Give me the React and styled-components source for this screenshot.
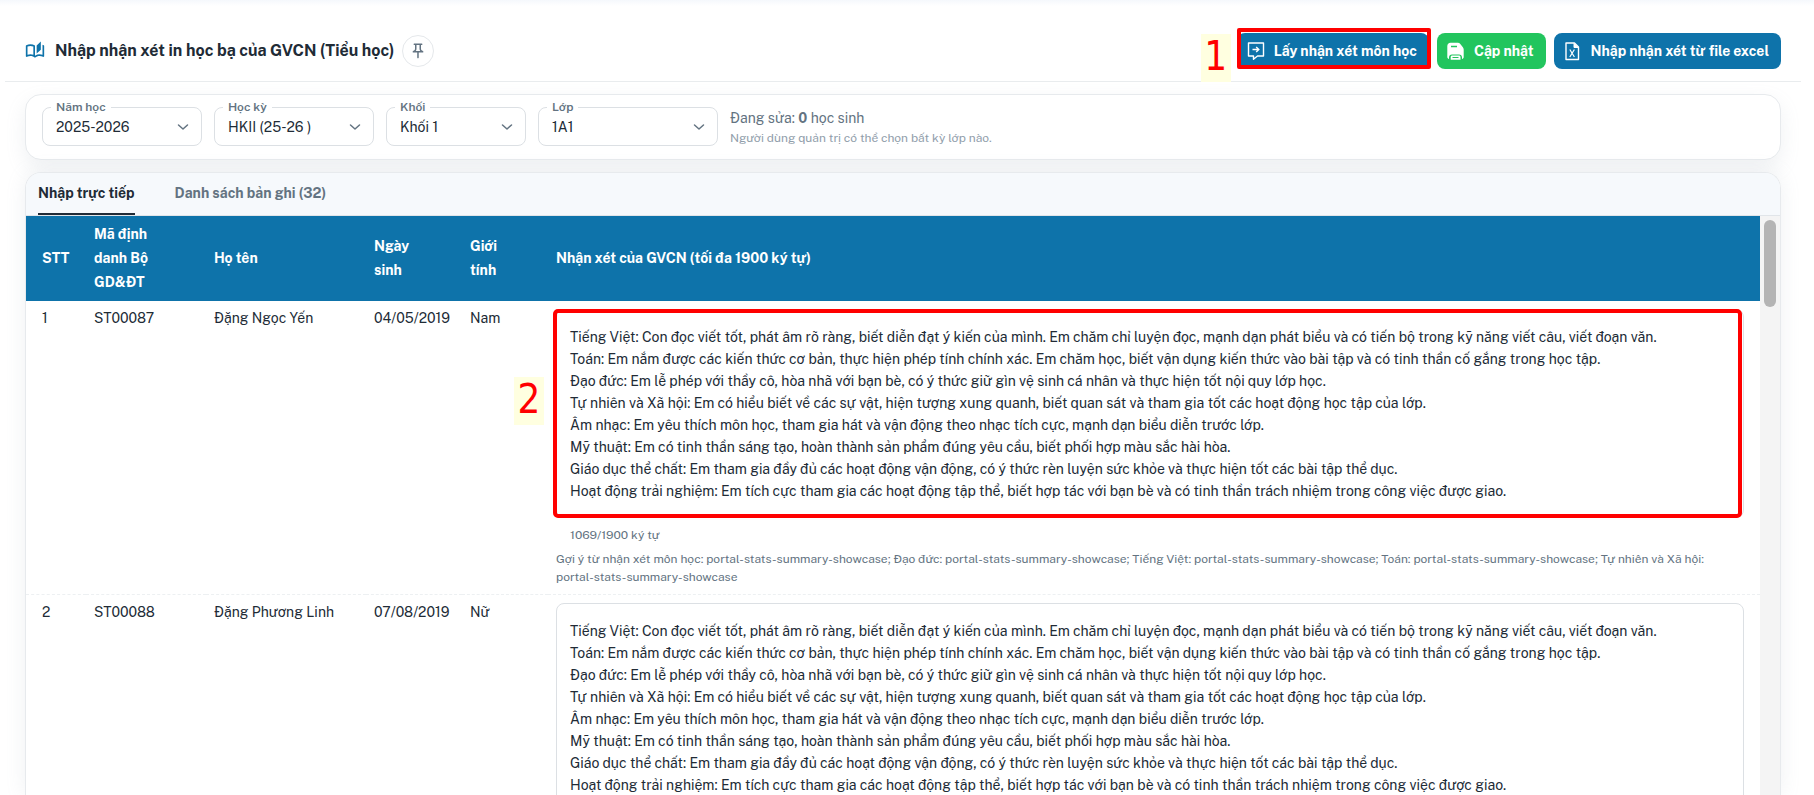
import React, { useState } from "react";
import styled, { createGlobalStyle } from "styled-components";
import { MdOutlineAutoStories, MdOutlinePushPin } from "react-icons/md";

const years = ["2025-2026"];
const terms = ["HKII (25-26 )"];
const grades = ["Khối 1"];
const classes = ["1A1"];

const comment = [
  "Tiếng Việt: Con đọc viết tốt, phát âm rõ ràng, biết diễn đạt ý kiến của mình. Em chăm chỉ luyện đọc, mạnh dạn phát biểu và có tiến bộ trong kỹ năng viết câu, viết đoạn văn.",
  "Toán: Em nắm được các kiến thức cơ bản, thực hiện phép tính chính xác. Em chăm học, biết vận dụng kiến thức vào bài tập và có tinh thần cố gắng trong học tập.",
  "Đạo đức: Em lễ phép với thầy cô, hòa nhã với bạn bè, có ý thức giữ gìn vệ sinh cá nhân và thực hiện tốt nội quy lớp học.",
  "Tự nhiên và Xã hội: Em có hiểu biết về các sự vật, hiện tượng xung quanh, biết quan sát và tham gia tốt các hoạt động học tập của lớp.",
  "Âm nhạc: Em yêu thích môn học, tham gia hát và vận động theo nhạc tích cực, mạnh dạn biểu diễn trước lớp.",
  "Mỹ thuật: Em có tinh thần sáng tạo, hoàn thành sản phẩm đúng yêu cầu, biết phối hợp màu sắc hài hòa.",
  "Giáo dục thể chất: Em tham gia đầy đủ các hoạt động vận động, có ý thức rèn luyện sức khỏe và thực hiện tốt các bài tập thể dục.",
  "Hoạt động trải nghiệm: Em tích cực tham gia các hoạt động tập thể, biết hợp tác với bạn bè và có tinh thần trách nhiệm trong công việc được giao.",
].join("\n");

const hint =
  "Gợi ý từ nhận xét môn học: portal-stats-summary-showcase; Đạo đức: portal-stats-summary-showcase; Tiếng Việt: portal-stats-summary-showcase; Toán: portal-stats-summary-showcase; Tự nhiên và Xã hội: portal-stats-summary-showcase";

const students = [
  { code: "ST00087", name: "Đặng Ngọc Yến", dob: "04/05/2019", gender: "Nam", step: "2" },
  { code: "ST00088", name: "Đặng Phương Linh", dob: "07/08/2019", gender: "Nữ" },
];

function CommentIcon() {
  return (
    <svg width="20" height="20" viewBox="0 0 20 20" fill="none" stroke="currentColor" strokeWidth="1.4" aria-hidden="true">
      <path d="M2.500 2h15v13h-6l-4 3.200V15h-5z" strokeLinejoin="round" />
      <path d="M6.500 8.500h6M10.200 6l2.600 2.500-2.600 2.500" />
    </svg>
  );
}

function SaveIcon() {
  return (
    <svg width="20" height="20" viewBox="0 0 20 20" fill="currentColor" aria-hidden="true">
      <path
        fillRule="evenodd"
        d="M4.500 1.800h7.300c1 0 1.800.4 2.500 1.100l2.400 3c.6.800 1 1.600 1 2.600v7.500c0 1-.7 1.800-1.700 1.900v-1.400c0-2-1.200-3-3-3H6c-1.800 0-3 1-3 3v1.400c-1-.1-1.700-.9-1.700-1.900V5c0-1.800 1.300-3.200 3.200-3.200zM5 4.800v1.400h6V4.800z"
      />
      <path
        fillRule="evenodd"
        d="M6.500 14.500h6.200c1.200 0 1.800.6 1.800 1.800v2.400H4.700v-2.400c0-1.200.6-1.800 1.800-1.800zM6.500 16v1h6v-1z"
      />
    </svg>
  );
}

function ExcelIcon() {
  return (
    <svg width="20" height="20" viewBox="0 0 20 20" fill="none" stroke="currentColor" strokeWidth="1.400" aria-hidden="true">
      <path d="M3 2h8.500L15.500 6v12.500H3z" strokeLinejoin="round" />
      <path d="M11 2.300v4.200h4.200z" fill="currentColor" strokeWidth="1" />
      <path d="M6.800 8.500l4.600 7.500M11.400 8.500L6.800 16" strokeWidth="1.200" />
    </svg>
  );
}

function SelectField({ id, label, width, options }) {
  return (
    <Field $width={width}>
      <FieldLabel htmlFor={id}>{label}</FieldLabel>
      <Select id={id}>
        {options.map((item) => (
          <option key={item}>{item}</option>
        ))}
      </Select>
      <Chevron width="12" height="8" viewBox="0 0 12 8" aria-hidden="true">
        <path d="M1.500 2L6 6l4.500-4" fill="none" stroke="#637381" strokeWidth="1.5" strokeLinecap="round" strokeLinejoin="round" />
      </Chevron>
    </Field>
  );
}

function StudentRow({ index, student }) {
  const [value, setValue] = useState(comment);
  return (
    <tr>
      <Cell>{index + 1}</Cell>
      <Cell>{student.code}</Cell>
      <Cell>{student.name}</Cell>
      <Cell>{student.dob}</Cell>
      <Cell>{student.gender}</Cell>
      <Cell>
        <CommentBox>
          <CommentArea
            aria-label={`Nhận xét của ${student.name}`}
            value={value}
            onChange={(e) => setValue(e.target.value)}
          />
          {student.step && <AreaMark />}
          {student.step && <AreaStep>{student.step}</AreaStep>}
        </CommentBox>
        <Counter>1069/1900 ký tự</Counter>
        <Hint>{hint}</Hint>
      </Cell>
    </tr>
  );
}

export default function App() {
  return (
    <Page>
      <GlobalStyle />
      <Header>
        <HeaderIcon />
        <Title>Nhập nhận xét in học bạ của GVCN (Tiểu học)</Title>
        <PinButton type="button" aria-label="Ghim">
          <MdOutlinePushPin size={18} />
        </PinButton>
        <Actions>
          <ActionWrap>
            <ActionButton type="button">
              <CommentIcon />
              Lấy nhận xét môn học
            </ActionButton>
            <ButtonMark />
            <ButtonStep>1</ButtonStep>
          </ActionWrap>
          <ActionButton type="button" $green>
            <SaveIcon />
            Cập nhật
          </ActionButton>
          <ActionButton type="button">
            <ExcelIcon />
            Nhập nhận xét từ file excel
          </ActionButton>
        </Actions>
      </Header>
      <Filters>
        <SelectField id="year" label="Năm học" width={160} options={years} />
        <SelectField id="term" label="Học kỳ" width={160} options={terms} />
        <SelectField id="grade" label="Khối" width={140} options={grades} />
        <SelectField id="class" label="Lớp" width={180} options={classes} />
        <Status>
          <Editing>
            Đang sửa: <b>0</b> học sinh
          </Editing>
          <Note>Người dùng quản trị có thể chọn bất kỳ lớp nào.</Note>
        </Status>
      </Filters>
      <Panel>
        <Tabs>
          <Tab type="button" $active>Nhập trực tiếp</Tab>
          <Tab type="button">Danh sách bản ghi (32)</Tab>
        </Tabs>
        <TableArea>
          <TableScroll>
            <Table>
              <colgroup>
                <Col $width={60} />
                <Col $width={120} />
                <Col $width={160} />
                <Col $width={96} />
                <Col $width={86} />
                <Col />
              </colgroup>
              <thead>
                <tr>
                  <HeadCell>STT</HeadCell>
                  <HeadCell>Mã định danh Bộ GD&amp;ĐT</HeadCell>
                  <HeadCell>Họ tên</HeadCell>
                  <HeadCell>Ngày sinh</HeadCell>
                  <HeadCell>Giới tính</HeadCell>
                  <HeadCell>Nhận xét của GVCN (tối đa 1900 ký tự)</HeadCell>
                </tr>
              </thead>
              <tbody>
                {students.map((student, index) => (
                  <StudentRow key={student.code} index={index} student={student} />
                ))}
              </tbody>
            </Table>
          </TableScroll>
          <Track>
            <Thumb />
          </Track>
        </TableArea>
      </Panel>
    </Page>
  );
}

const GlobalStyle = createGlobalStyle`
  * {
    box-sizing: border-box;
  }
  body {
    margin: 0;
    background: #fff;
    color: #212b36;
    font-family: "Public Sans", Inter, "Noto Sans", sans-serif;
    font-size: 14px;
    line-height: 22px;
  }
  button, select, textarea {
    font: inherit;
    color: inherit;
  }
`;

const Page = styled.div`
  height: 100vh;
  overflow: hidden;
  display: flex;
  flex-direction: column;
  padding: 0 13px 0 5px;
  background: linear-gradient(#f5f8fc, #fff 6px);
`;

const Header = styled.header`
  display: flex;
  align-items: center;
  padding: 20px 20px 0;
  height: 82px;
  flex: none;
  border-bottom: 1px solid #e9ecee;
`;

const HeaderIcon = styled(MdOutlineAutoStories)`
  width: 20px;
  height: 20px;
  margin-right: 10px;
  color: #0e73aa;
`;

const Title = styled.h1`
  margin: 0;
  font-size: 16px;
  line-height: 24px;
  font-weight: 700;
`;

const PinButton = styled.button`
  display: flex;
  align-items: center;
  justify-content: center;
  width: 32px;
  height: 32px;
  margin-left: 8px;
  padding: 0;
  border: 1px solid #e5e8eb;
  border-radius: 50%;
  background: #fff;
  color: #637381;
`;

const Actions = styled.div`
  display: flex;
  gap: 8px;
  margin-left: auto;
`;

const ActionWrap = styled.div`
  position: relative;
`;

const ActionButton = styled.button`
  display: flex;
  align-items: center;
  gap: 8px;
  height: 36px;
  padding: 0 12px 0 9px;
  border: 0;
  border-radius: 8px;
  background: ${(props) => (props.$green ? "#22c55e" : "#0e73aa")};
  color: #fff;
  font-weight: 700;
`;

const Mark = styled.div`
  position: absolute;
  border: 4px solid #f00;
  pointer-events: none;
`;

const ButtonMark = styled(Mark)`
  inset: -5px -2px 0 0;
  border-radius: 2px;
`;

const AreaMark = styled(Mark)`
  inset: 0 2px 0 -3px;
  border-radius: 5px;
`;

const Step = styled.span`
  position: absolute;
  width: 30px;
  height: 48px;
  background: #ffffe0;
  color: #f00;
  font-family: "DejaVu Sans Condensed", "DejaVu Sans", sans-serif;
  font-size: 40px;
  font-weight: 400;
  line-height: 44px;
  text-align: center;
`;

const ButtonStep = styled(Step)`
  right: calc(100% + 6px);
  top: 1px;
`;

const AreaStep = styled(Step)`
  right: calc(100% + 12px);
  top: 68px;
`;

const Filters = styled.section`
  display: flex;
  align-items: flex-start;
  gap: 12px;
  flex: none;
  margin: 12px 20px;
  padding: 12px 16px;
  border: 1px solid #e7eaed;
  border-radius: 16px;
  background: #fff;
  box-shadow: 0 8px 20px rgba(145, 158, 171, 0.14);
`;

const Field = styled.div`
  position: relative;
  width: ${(props) => props.$width}px;
`;

const FieldLabel = styled.label`
  position: absolute;
  top: -9px;
  left: 9px;
  padding: 0 5px;
  background: #fff;
  color: #637381;
  font-size: 12px;
  line-height: 18px;
  font-weight: 600;
`;

const Select = styled.select`
  display: block;
  width: 100%;
  height: 39px;
  padding: 0 32px 0 13px;
  border: 1px solid #dce0e4;
  border-radius: 8px;
  background: #fff;
  appearance: none;
`;

const Chevron = styled.svg`
  position: absolute;
  right: 13px;
  top: 16px;
  pointer-events: none;
`;

const Status = styled.div`
  color: #637381;
`;

const Editing = styled.p`
  margin: 0;
`;

const Note = styled.p`
  margin: 0;
  color: #919eab;
  font-size: 12px;
  line-height: 18px;
`;

const Panel = styled.section`
  display: flex;
  flex-direction: column;
  flex: 1;
  min-height: 0;
  margin: 0 20px;
  border: 1px solid #e7eaed;
  border-bottom: 0;
  border-radius: 16px 16px 0 0;
  overflow: hidden;
  box-shadow: 0 0 20px rgba(145, 158, 171, 0.14);
`;

const Tabs = styled.nav`
  display: flex;
  gap: 40px;
  flex: none;
  padding: 0 12px;
  border-bottom: 1px solid #e1e5e9;
  background: #f6f9fc;
`;

const Tab = styled.button`
  height: 42px;
  padding: 0;
  border: 0;
  border-bottom: 2px solid ${(props) => (props.$active ? "#212b36" : "transparent")};
  background: none;
  color: ${(props) => (props.$active ? "#212b36" : "#637381")};
  font-weight: 700;
`;

const TableArea = styled.div`
  display: flex;
  flex: 1;
  min-height: 0;
`;

const TableScroll = styled.div`
  flex: 1;
  min-width: 0;
  overflow: hidden;
`;

const Track = styled.div`
  width: 20px;
  padding: 4px;
  background: #f4f4f4;
`;

const Thumb = styled.div`
  height: 87px;
  border-radius: 6px;
  background: #b4b4b4;
`;

const Table = styled.table`
  width: 100%;
  table-layout: fixed;
  border-collapse: separate;
  border-spacing: 0;
`;

const Col = styled.col`
  width: ${(props) => (props.$width ? `${props.$width}px` : "auto")};
`;

const HeadCell = styled.th`
  padding: 6px 32px 6px 8px;
  border-bottom: 1px solid #0e73aa;
  background: #0e73aa;
  color: #fff;
  font-weight: 700;
  line-height: 24px;
  text-align: left;
  &:first-child {
    padding-left: 16px;
    padding-right: 0;
  }
`;

const Cell = styled.td`
  padding: 6px 8px;
  border-bottom: 1px dashed #edf0f2;
  vertical-align: top;
  &:first-child {
    padding-left: 16px;
  }
  &:last-child {
    padding: 8px 16px 8px 8px;
  }
`;

const CommentBox = styled.div`
  position: relative;
`;

const CommentArea = styled.textarea`
  display: block;
  width: 100%;
  height: 209px;
  padding: 16px 13px 15px;
  border: 1px solid #dce0e4;
  border-radius: 8px;
  background: #fff;
  outline: 0;
  resize: none;
  overflow: hidden;
`;

const Counter = styled.p`
  margin: 8px 14px 0;
  color: #637381;
  font-size: 12px;
  line-height: 18px;
`;

const Hint = styled.p`
  margin: 6px 0 0;
  color: #637381;
  font-size: 12px;
  line-height: 18px;
`;
